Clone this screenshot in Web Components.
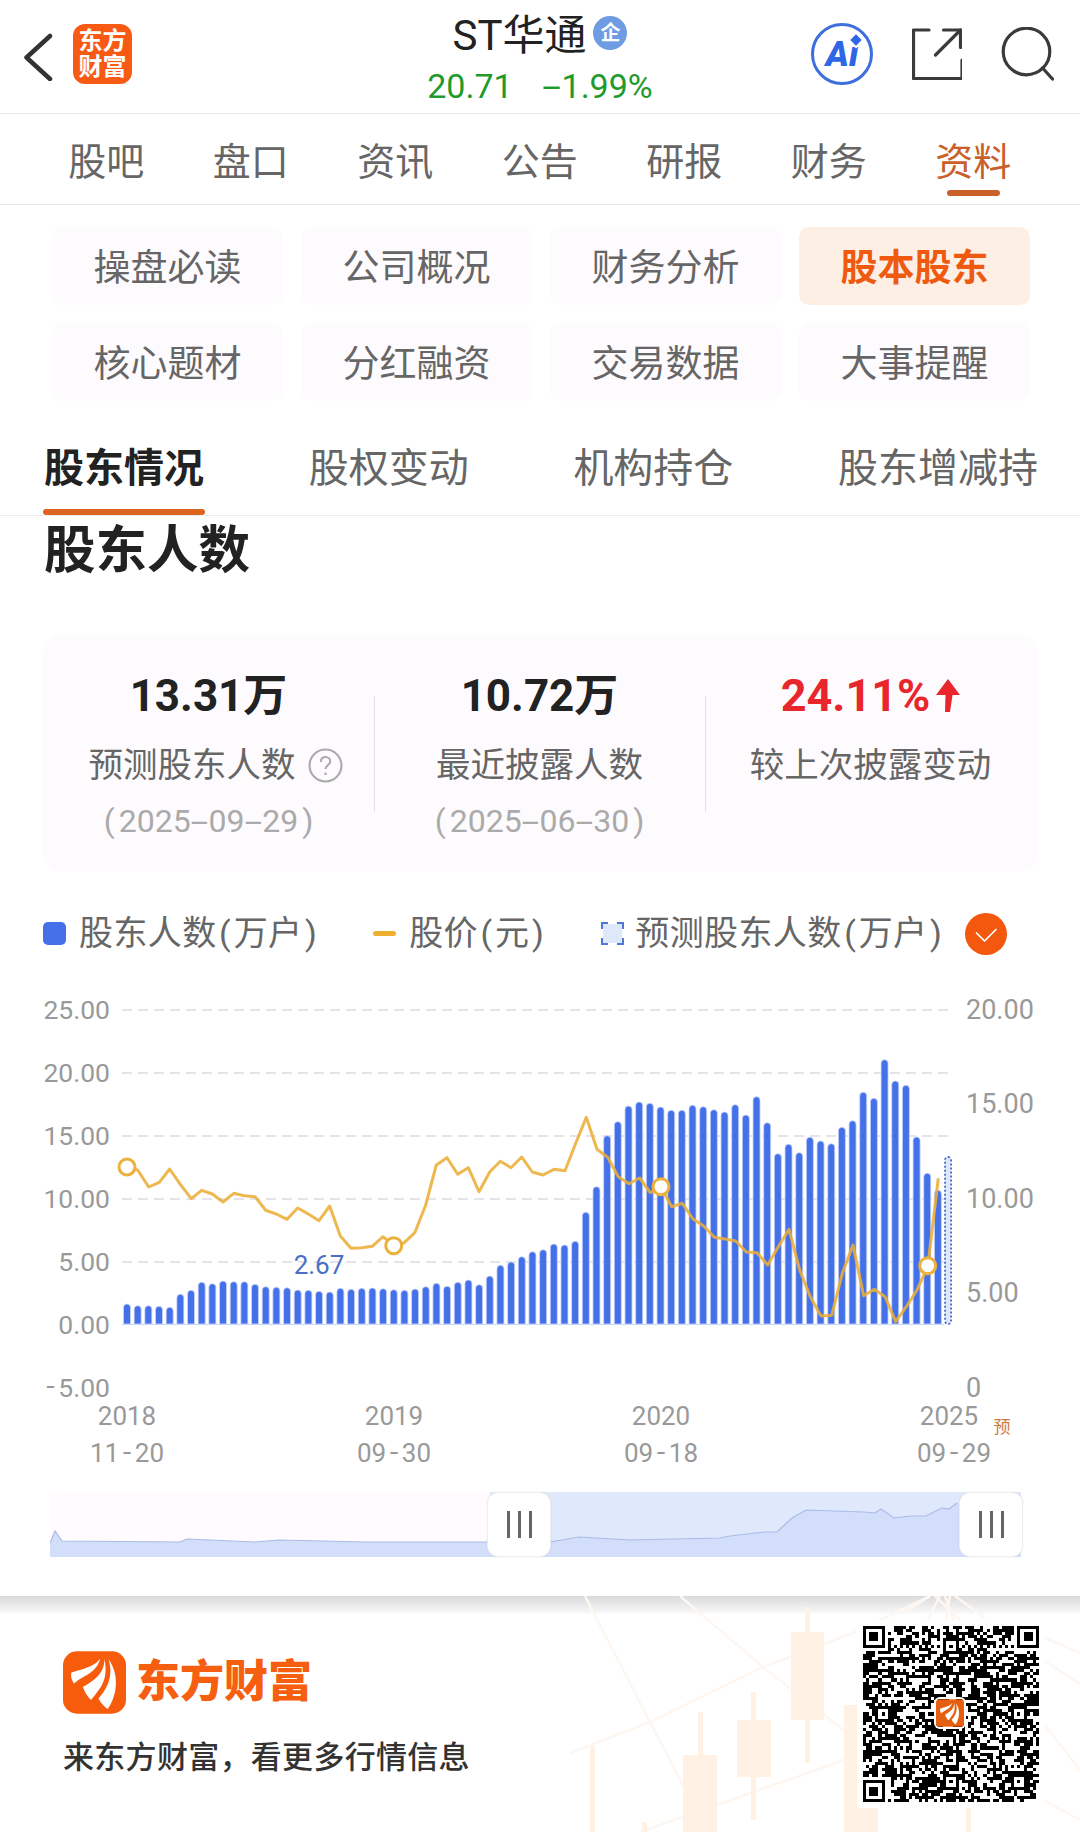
<!DOCTYPE html>
<html lang="zh">
<head>
<meta charset="utf-8">
<title>ST华通 股东人数</title>
<style>
    html, body { margin: 0; padding: 0; background: #fff; }
    body {
        width: 1080px;
        height: 1832px;
        overflow: hidden;
        font-family: Roboto, "Noto Sans CJK SC", sans-serif;
        color: #222;
    }
    /* the reference has wide dashes and roomy brackets */
    .h { display: inline-block; margin: 0 0.14em; transform: scaleX(2); }
    .p { margin: 0 4px; }
</style>
</head>
<body>
<em-header></em-header>
<em-tabs>
    <em-tab>股吧</em-tab><em-tab>盘口</em-tab><em-tab>资讯</em-tab><em-tab>公告</em-tab><em-tab>研报</em-tab><em-tab>财务</em-tab><em-tab active>资料</em-tab>
</em-tabs>
<em-chips>
    <em-chip>操盘必读</em-chip><em-chip>公司概况</em-chip><em-chip>财务分析</em-chip><em-chip active>股本股东</em-chip>
    <em-chip>核心题材</em-chip><em-chip>分红融资</em-chip><em-chip>交易数据</em-chip><em-chip>大事提醒</em-chip>
</em-chips>
<em-subtabs>
    <em-subtab active>股东情况</em-subtab><em-subtab>股权变动</em-subtab><em-subtab>机构持仓</em-subtab><em-subtab>股东增减持</em-subtab>
</em-subtabs>
<em-section heading="股东人数">
    <em-stats>
        <em-stat hint>
            <span slot="value">13.31万</span>
            <span slot="label">预测股东人数</span>
            <svg slot="label" width="35" height="35" viewBox="0 0 34 34" fill="none" stroke="#aaa" stroke-width="2"><circle cx="17" cy="17" r="15.5"/><path d="M12.5 13.5c0-3 2-4.8 4.6-4.8s4.5 1.800 4.500 4.200c0 3.600-4.500 3.700-4.500 7.600"/><circle cx="17" cy="25" r="1.300" fill="#aaa" stroke="none"/></svg>
            <span slot="date"><span class="p">(</span>2025<span class="h">-</span>09<span class="h">-</span>29<span class="p">)</span></span>
        </em-stat>
        <em-stat>
            <span slot="value">10.72万</span>
            <span slot="label">最近披露人数</span>
            <span slot="date"><span class="p">(</span>2025<span class="h">-</span>06<span class="h">-</span>30<span class="p">)</span></span>
        </em-stat>
        <em-stat tone="up">
            <span slot="value">24.11%</span>
            <svg slot="value" width="24" height="34" viewBox="0 0 24 34"><path d="M12 0L24 16H16.500L14 33H9L9.500 16H0Z" fill="#e8262c"/></svg>
            <span slot="label">较上次披露变动</span>
        </em-stat>
    </em-stats>
    <em-legend></em-legend>
    <em-chart></em-chart>
    <em-range></em-range>
</em-section>
<em-promo></em-promo>

<script>
const BLADES = 'M137 40C120 65 85 70 50 82C48 92 50 105 58 115C85 90 125 85 137 40ZM150 40C150 85 120 105 85 125C90 140 98 155 110 165C130 135 165 110 150 40ZM162 42C178 90 160 130 132 160C140 175 150 185 160 192C190 150 195 85 162 42Z';

class EmHeader extends HTMLElement {
    connectedCallback() {
        this.attachShadow({ mode: 'open' });
        this.shadowRoot.innerHTML = `
            <style>
                :host { display: grid; grid-template-columns: 1fr auto 1fr; height: 113px; border-bottom: 1px solid #e6e6e6; }
                .left { display: flex; align-items: center; padding-left: 22px; gap: 19px; }
                .logo {
                    width: 59px; height: 60px; border-radius: 12px; background: #f75a12; color: #fff;
                    display: flex; align-items: center; justify-content: center; text-align: center;
                    font-size: 24px; line-height: 26px; font-weight: 700; margin-top: -6px;
                }
                .title { display: flex; flex-direction: column; align-items: center; }
                .name { display: flex; align-items: center; height: 38px; margin-top: 17px; font-size: 42px; line-height: 38px; color: #222; gap: 7px; }
                .badge {
                    width: 34px; height: 34px; border-radius: 50%; background: #6e9be2; color: #fff;
                    font-size: 20px; line-height: 34px; font-weight: 700; text-align: center; margin-top: -6px;
                }
                .quote { margin-top: 14px; font-size: 34px; line-height: 34px; color: #1f9a2c; display: flex; gap: 30px; }
                .h { display: inline-block; margin: 0 0.14em; transform: scaleX(2); }
                .right { display: flex; justify-content: flex-end; align-items: flex-start; padding: 23px 25px 0 0; gap: 39px; }
                .ai {
                    position: relative; width: 56px; height: 56px; border: 3px solid #3e6fdc; border-radius: 50%;
                    color: #2f66e6; font-size: 35px; font-weight: 900; font-style: italic; line-height: 58px; text-align: center;
                }
                .ai i { position: absolute; right: 10px; top: 10px; width: 8px; height: 8px; background: #2f66e6; transform: rotate(45deg); box-shadow: 0 0 0 2px #fff; }
                svg { display: block; }
            </style>
            <div class="left">
                <svg width="32" height="48" viewBox="0 0 32 48" fill="none" stroke="#333" stroke-width="4.500" stroke-linecap="round" stroke-linejoin="round"><path d="M28 3L4.500 24.500 28 46"/></svg>
                <div class="logo"><span>东方<br>财富</span></div>
            </div>
            <div class="title">
                <div class="name"><span>ST华通</span><span class="badge">企</span></div>
                <div class="quote"><span>20.71</span><span><span class="h">-</span>1.99%</span></div>
            </div>
            <div class="right">
                <div class="ai">Ai<i></i></div>
                <svg width="50" height="56" viewBox="0 0 50 56" fill="none" stroke="#3a3a3a" stroke-width="3.200" stroke-linecap="round" stroke-linejoin="round" style="margin-top:5px"><path d="M17 2H1.500v48.500h48.500V32"/><path d="M23.500 27L48.500 2"/><path d="M31.500 2h17v17.500"/></svg>
                <svg width="54" height="56" viewBox="0 0 54 56" fill="none" stroke="#3a3a3a" stroke-width="3.200" stroke-linecap="round" style="margin-top:4px"><circle cx="25.500" cy="24.500" r="23.300"/><path d="M41.500 41l10 11"/></svg>
            </div>
        `;
    }
}

class EmTabs extends HTMLElement {
    connectedCallback() {
        this.attachShadow({ mode: 'open' });
        this.shadowRoot.innerHTML = `
            <style>
                :host { display: flex; height: 90px; padding: 0 34px; border-bottom: 1px solid #e8e8e8; }
            </style>
            <slot></slot>
        `;
    }
}

class EmTab extends HTMLElement {
    connectedCallback() {
        this.attachShadow({ mode: 'open' });
        this.shadowRoot.innerHTML = `
            <style>
                :host { position: relative; flex: 0 0 144.5px; box-sizing: border-box; padding-bottom: 2px; display: flex; align-items: center; justify-content: center; font-size: 38px; color: #666; }
                :host([active]) { color: #c9602a; }
                :host([active])::after {
                    content: ''; position: absolute; left: 46px; right: 46px; bottom: 8px; height: 6px;
                    border-radius: 3px; background: #c9602a;
                }
            </style>
            <slot></slot>
        `;
    }
}

class EmChips extends HTMLElement {
    connectedCallback() {
        this.attachShadow({ mode: 'open' });
        this.shadowRoot.innerHTML = `
            <style>
                :host { display: grid; grid-template-columns: repeat(4, 231px); gap: 18px; padding: 22px 0 0 52px; }
            </style>
            <slot></slot>
        `;
    }
}

class EmChip extends HTMLElement {
    connectedCallback() {
        this.attachShadow({ mode: 'open' });
        this.shadowRoot.innerHTML = `
            <style>
                :host { display: flex; box-sizing: border-box; height: 78px; padding-bottom: 2px; align-items: center; justify-content: center; border-radius: 10px; background: #fefbfe; font-size: 37px; color: #666; }
                :host([active]) { background: #feefe5; color: #ee5a10; font-weight: 700; }
            </style>
            <slot></slot>
        `;
    }
}

class EmSubtabs extends HTMLElement {
    connectedCallback() {
        this.attachShadow({ mode: 'open' });
        this.shadowRoot.innerHTML = `
            <style>
                :host { display: flex; align-items: flex-end; height: 114px; gap: 104.7px; padding-left: 44px; border-bottom: 1px solid #ececec; white-space: nowrap; overflow: hidden; }
            </style>
            <slot></slot>
        `;
    }
}

class EmSubtab extends HTMLElement {
    connectedCallback() {
        this.attachShadow({ mode: 'open' });
        this.shadowRoot.innerHTML = `
            <style>
                :host { position: relative; display: block; box-sizing: border-box; height: 68px; padding-top: 2px; font-size: 40px; line-height: 40px; color: #666; }
                :host([active]) { color: #222; font-weight: 700; }
                :host([active])::after {
                    content: ''; position: absolute; left: -1px; right: -1px; bottom: 0; height: 6px;
                    border-radius: 3px; background: #dd6420;
                }
            </style>
            <slot></slot>
        `;
    }
}

class EmSection extends HTMLElement {
    connectedCallback() {
        this.attachShadow({ mode: 'open' });
        this.shadowRoot.innerHTML = `
            <style>
                :host { display: block; height: 1080px; }
                h2 { margin: 0; padding: 10px 0 0 44px; height: 110px; box-sizing: border-box; font-size: 51.5px; line-height: 50px; font-weight: 700; color: #222; }
            </style>
            <h2>${this.getAttribute('heading')}</h2>
            <slot></slot>
        `;
    }
}

class EmStats extends HTMLElement {
    connectedCallback() {
        this.attachShadow({ mode: 'open' });
        this.shadowRoot.innerHTML = `
            <style>
                :host { display: grid; grid-template-columns: repeat(3, 331px); box-sizing: border-box; height: 237px; margin: 9px 42px 0 43px; padding-top: 39px; border-radius: 18px; background: #fefbfe; }
            </style>
            <slot></slot>
        `;
    }
}

class EmStat extends HTMLElement {
    connectedCallback() {
        this.attachShadow({ mode: 'open' });
        this.shadowRoot.innerHTML = `
            <style>
                :host { position: relative; display: flex; flex-direction: column; align-items: center; }
                :host(:not(:first-child))::before { content: ''; position: absolute; left: 0; top: 22px; height: 116px; width: 1px; background: #e2e2e4; }
                .value { display: flex; align-items: center; gap: 3px; height: 44px; font-size: 44px; line-height: 44px; font-weight: 700; color: #222; }
                :host([tone="up"]) .value { color: #e8262c; gap: 6px; font-size: 45px; }
                .label { display: flex; align-items: center; gap: 12px; height: 34px; margin-top: 30px; font-size: 34.5px; line-height: 34px; color: #666; }
                :host([hint]) .label { padding-left: 14px; }
                .date { height: 34px; margin-top: 22px; font-size: 32px; line-height: 34px; color: #aaa; }
            </style>
            <div class="value"><slot name="value"></slot></div>
            <div class="label"><slot name="label"></slot></div>
            <div class="date"><slot name="date"></slot></div>
        `;
    }
}

class EmLegend extends HTMLElement {
    connectedCallback() {
        this.attachShadow({ mode: 'open' });
        const unit = s => `<b>(</b>${s}<b>)</b>`;
        this.shadowRoot.innerHTML = `
            <style>
                :host { display: flex; align-items: center; height: 41px; margin: 41px 0 0 43px; font-size: 34px; letter-spacing: 0.4px; line-height: 43px; color: #666; white-space: nowrap; }
                .item { display: flex; align-items: center; gap: 13px; }
                .price { margin-left: 53.5px; }
                .predict { margin-left: 54.5px; gap: 11px; }
                b { font-weight: 400; margin: 0 2.5px; }
                .sq { width: 23px; height: 23px; border-radius: 5px; background: #4470ea; }
                .dash { width: 23px; height: 5px; border-radius: 3px; background: #eeb02f; }
                .check { margin-left: 20px; }
                svg { display: block; }
            </style>
            <div class="item"><span class="sq"></span><span>股东人数${unit('万户')}</span></div>
            <div class="item price"><span class="dash"></span><span>股价${unit('元')}</span></div>
            <div class="item predict">
                <svg width="23" height="23" viewBox="0 0 23 23"><rect x="2" y="2" width="19" height="19" fill="#dfe7fb"/><path d="M1 7V1h6M16 1h6v6M22 16v6h-6M7 22H1v-6" fill="none" stroke="#4d79d8" stroke-width="2"/></svg>
                <span>预测股东人数${unit('万户')}</span>
            </div>
            <svg class="check" width="42" height="42" viewBox="0 0 42 42"><circle cx="21" cy="21" r="21" fill="#f4580f"/><path d="M11.500 20l8 8L31 16.500" fill="none" stroke="#fff" stroke-width="1.700" stroke-linecap="round" stroke-linejoin="round"/></svg>
        `;
    }
}

// tops of the bars and points of the price line, read off the reference
const BAR_TOPS = [1304,1305.7,1305.7,1306.3,1307.3,1294.3,1290.3,1282.3,1283.7,1281,1281.7,1281.7,1284.3,1286.7,1287.3,1287.7,1290,1290.3,1291.3,1292,1288.3,1289.3,1288.3,1288,1288.7,1289.7,1290.3,1289,1286.7,1283.3,1286.3,1282.3,1280,1284.7,1276,1265.3,1262,1256.7,1251.7,1249.7,1244,1245,1241.3,1212.3,1186.7,1135.7,1121.7,1106,1102,1103.3,1107,1110.3,1110.3,1105.3,1106.7,1109.7,1112,1104.7,1115,1096.7,1122.7,1153.7,1144.3,1152.7,1137.3,1141,1143.7,1127.3,1120.7,1092.3,1098.3,1059.7,1081,1085.3,1137,1173.3,1190.3];
const PREDICT_TOP = 1157;
const PRICE = [[127,1167.7],[137.7,1170],[148.7,1187],[159.3,1182.3],[169.7,1169],[180.3,1184.3],[191.3,1198.7],[201.7,1190.3],[212.3,1194],[223,1202],[233.7,1193.3],[244.3,1195.7],[255,1196.7],[265.7,1210.3],[276.3,1214],[287,1219.3],[297.7,1208],[308.3,1214],[319,1220.7],[329.7,1206],[340.3,1236],[351,1248.3],[361.7,1247.7],[372.3,1246.3],[383,1236.7],[393.7,1245.7],[404.3,1242.7],[415,1232.3],[425.7,1205],[436.3,1165],[447,1157.7],[457.7,1174.3],[468.3,1167.7],[479,1191.7],[489.7,1172],[500.3,1161.3],[511,1167.7],[521.700,1157],[532.3,1172],[543,1175],[554,1169.3],[565,1170.7],[575.7,1143.3],[586.3,1117.3],[597,1149.3],[607.7,1157.3],[618.3,1176.7],[629,1183.7],[639.7,1178],[650.3,1192.7],[661,1186.7],[671.7,1206.7],[682.3,1203.3],[693,1219],[703.7,1226],[714.3,1237.3],[725,1239],[735.7,1241],[746.3,1252],[757,1252.7],[767.7,1265],[778.3,1246.7],[789,1229.3],[799.7,1270],[810.3,1296.7],[821,1316],[831.7,1315.3],[842.3,1273.3],[853,1245],[863.700,1295.7],[874.3,1289.3],[885,1296.7],[895.7,1321.7],[906.3,1306.7],[917,1290],[927.7,1266.7],[938.3,1178.3]];

class EmChart extends HTMLElement {
    connectedCallback() {
        this.attachShadow({ mode: 'open' });
        const base = 1324;
        let bars = '';
        BAR_TOPS.forEach((top, i) => {
            const x = 123.500 + i * 10.67;
            bars += `<path d="M${x} ${base}V${top + 3.500}a3.500 3.500 0 0 1 7 0V${base}Z"/>`;
        });
        const px = 123.500 + 77 * 10.67;
        const dash = s => s.replace('-', '<tspan class="h">-</tspan>');
        const gridYs = [1010, 1073, 1136, 1199, 1262];
        const leftAxis = [['25.00', 1009], ['20.00', 1072], ['15.00', 1135], ['10.00', 1198], ['5.00', 1261], ['0.00', 1324], ['-5.00', 1387]];
        const rightAxis = [['20.00', 1010], ['15.00', 1104], ['10.00', 1199], ['5.00', 1293], ['0', 1388]];
        const xAxis = [['2018', '11-20', 127, 127], ['2019', '09-30', 394, 394], ['2020', '09-18', 661, 661], ['2025', '09-29', 949, 954]];
        const line = PRICE.map(p => p.join(',')).join(' ');
        const dots = [[127, 1167], [393.7, 1245.7], [661, 1186.7], [927.7, 1265.700]];
        this.shadowRoot.innerHTML = `
            <style>
                :host { display: block; height: 490px; margin-top: 36px; }
                svg { display: block; }
                text { font-size: 26px; fill: #999; dominant-baseline: central; }
                .right text { font-size: 27px; }
                .h { font-family: "Liberation Mono", monospace; }
            </style>
            <svg width="1080" height="490" viewBox="0 990 1080 490">
                <g stroke="#e4e4ea" stroke-width="2" stroke-dasharray="10 6">
                    ${gridYs.map(y => `<line x1="122" x2="952" y1="${y}" y2="${y}"/>`).join('')}
                </g>
                <g text-anchor="end">${leftAxis.map(a => `<text x="110" y="${a[1]}" style="font-size:26.500px">${dash(a[0])}</text>`).join('')}</g>
                <g class="right">${rightAxis.map(a => `<text x="966" y="${a[1]}">${a[0]}</text>`).join('')}</g>
                <g fill="#4470ea" stroke="#c9d6f8" stroke-width="0.800">${bars}</g>
                <line x1="122" x2="944" y1="1324.500" y2="1324.500" stroke="#c9d6f8" stroke-width="1"/>
                <rect x="${px}" y="${PREDICT_TOP}" width="6" height="${base - PREDICT_TOP}" rx="3" fill="#dfe7fb" stroke="#3f6bd0" stroke-width="1.800" stroke-dasharray="2 2"/>
                <polyline points="${line}" fill="none" stroke="#ecae38" stroke-opacity="0.880" stroke-width="3" stroke-linejoin="round"/>
                ${dots.map(d => `<circle cx="${d[0]}" cy="${d[1]}" r="8" fill="#fff" stroke="#ecb03c" stroke-width="3"/>`).join('')}
                <text x="319" y="1265" text-anchor="middle" style="fill:#4a6fc8">2.67</text>
                <g text-anchor="middle">
                    ${xAxis.map(a => `<text x="${a[2]}" y="1416">${a[0]}</text><text x="${a[3]}" y="1453">${dash(a[1])}</text>`).join('')}
                </g>
                <text x="1002" y="1427" text-anchor="middle" style="font-size:17px;fill:#cb7a3c">预</text>
            </svg>
        `;
    }
}

class EmRange extends HTMLElement {
    connectedCallback() {
        this.attachShadow({ mode: 'open' });
        // area outline, in reference x / y
        const pts = [[50,1543],[55,1531],[62,1541],[180,1542],[187,1539],[255,1542],[279,1540],[365,1542],[550,1542],[579,1537],[630,1540],[720,1538],[730,1536],[764,1532],[777,1532],[792,1518],[806,1510],[864,1512],[875,1513],[881,1509],[894,1518],[902,1517],[912,1516],[926,1516],[942,1508],[949,1509],[957,1503]];
        const line = pts.map(p => p.join(',')).join(' ');
        this.shadowRoot.innerHTML = `
            <style>
                :host { position: relative; display: block; width: 973px; height: 65px; margin: 12px 0 0 50px; }
                svg { display: block; }
                .handle {
                    position: absolute; top: 0; width: 64px; height: 65px; box-sizing: border-box; border: 1px solid #eee;
                    border-radius: 11px; background: #fff; display: flex; align-items: center; justify-content: center; gap: 8px;
                    box-shadow: 0 0 2px rgba(0, 0, 0, 0.08);
                }
                .handle i { width: 3px; height: 27px; background: #666; }
            </style>
            <svg width="973" height="65" viewBox="50 1492 973 65">
                <rect x="50" y="1492" width="440" height="65" fill="#fffbfe"/>
                <rect x="490" y="1492" width="531" height="65" fill="#e0e8fc"/>
                <polygon points="50,1557 ${line} 1021,1503 1021,1557" fill="#d3dffa"/>
                <polyline points="${line}" fill="none" stroke="#a9bbe6" stroke-width="1.200"/>
            </svg>
            <div class="handle" style="left:437px"><i></i><i></i><i></i></div>
            <div class="handle" style="left:909px"><i></i><i></i><i></i></div>
        `;
    }
}

class EmQr extends HTMLElement {
    connectedCallback() {
        this.attachShadow({ mode: 'open' });
        const n = 57;
        const cells = [];
        for (let y = 0; y < n; y++) cells.push(new Array(n).fill(-1));
        const finder = (ox, oy) => {
            for (let y = -1; y <= 7; y++) for (let x = -1; x <= 7; x++) {
                if (ox + x < 0 || oy + y < 0 || ox + x >= n || oy + y >= n) continue;
                const ring = x >= 0 && x <= 6 && y >= 0 && y <= 6 && (x === 0 || x === 6 || y === 0 || y === 6);
                const core = x >= 2 && x <= 4 && y >= 2 && y <= 4;
                cells[oy + y][ox + x] = ring || core ? 1 : 0;
            }
        };
        finder(0, 0); finder(n - 7, 0); finder(0, n - 7);
        for (let i = 8; i < n - 8; i++) { cells[6][i] = (i + 1) % 2; cells[i][6] = (i + 1) % 2; }
        [6, 28, 50].forEach(cy => [6, 28, 50].forEach(cx => {
            if ((cx === 6 && cy === 6) || (cx === 50 && cy === 6) || (cx === 6 && cy === 50) || (cx === 28 && cy === 28)) return;
            for (let y = -2; y <= 2; y++) for (let x = -2; x <= 2; x++) {
                cells[cy + y][cx + x] = Math.max(Math.abs(x), Math.abs(y)) === 1 ? 0 : 1;
            }
        }));
        let seed = 20250929;
        const rnd = () => { seed = (seed * 1664525 + 1013904223) >>> 0; return (seed >>> 16) / 65536; };
        let d = '';
        for (let y = 0; y < n; y++) {
            for (let x = 0; x < n; x++) {
                let on = cells[y][x];
                if (on === -1) {
                    // runs of modules rather than pure noise, as a real code looks
                    const left = x > 0 ? cells[y][x - 1] : 0;
                    on = rnd() < (left === 1 ? 0.62 : 0.46) ? 1 : 0;
                    cells[y][x] = on;
                }
                if (on) d += `M${x} ${y}h1v1h-1z`;
            }
        }
        this.shadowRoot.innerHTML = `
            <style>
                :host { position: relative; display: block; width: 176px; height: 176px; padding: 6px; background: #fff; }
                svg { display: block; }
                .mark { position: absolute; left: 79px; top: 79px; width: 28px; height: 28px; border-radius: 4px; box-shadow: 0 0 0 2px #fff; }
            </style>
            <svg width="176" height="176" viewBox="0 0 57 57" shape-rendering="crispEdges"><path d="${d}" fill="#000"/></svg>
            <svg class="mark" viewBox="20 15 200 195"><rect x="20" y="15" width="200" height="195" fill="#e65f10"/><path d="${BLADES}" fill="#fff"/></svg>
        `;
    }
}

class EmPromo extends HTMLElement {
    connectedCallback() {
        this.attachShadow({ mode: 'open' });
        this.shadowRoot.innerHTML = `
            <style>
                :host {
                    position: relative; display: flex; justify-content: space-between; box-sizing: border-box;
                    height: 236px; padding: 55px 35px 0 63px; overflow: hidden;
                    background: linear-gradient(#dadada, #f8f8f8 17px, #fff 18px);
                }
                .decor { position: absolute; left: 0; top: 0; }
                .copy, em-qr { position: relative; }
                .brand { display: flex; align-items: center; gap: 10px; color: #f65e10; font-size: 44px; line-height: 63px; font-weight: 900; }
                .brand svg { display: block; }
                .tag { margin-top: 26px; font-size: 31px; letter-spacing: 0.3px; line-height: 36px; font-weight: 500; color: #333; }
                em-qr { margin-top: -31px; }
            </style>
            <svg class="decor" width="1080" height="236" viewBox="0 1596 1080 236">
                <g fill="none" stroke="#fef7f1" stroke-width="2.500">
                    <path d="M680 1596L763 1667 850 1735 880 1755"/>
                    <path d="M585 1596L650 1722 707 1832"/>
                    <path d="M570 1753L650 1722 763 1667 853 1633 930 1596"/>
                    <path d="M640 1832L836 1763 900 1730"/>
                    <path d="M935 1596L960 1620M945 1596L955 1625M940 1596L925 1625M950 1596L945 1625M955 1596L985 1618M930 1596L905 1612"/>
                    <path d="M1043 1637L1080 1653M1043 1660L1080 1684M1043 1723L1080 1770M1043 1800L1080 1820"/>
                </g>
                <g fill="#fff2e5">
                    <rect x="683" y="1755" width="34" height="77"/><rect x="698" y="1712" width="5" height="43"/>
                    <rect x="737" y="1720" width="34" height="57"/><rect x="751" y="1692" width="5" height="128"/>
                    <rect x="791" y="1632" width="33" height="88"/><rect x="805" y="1607" width="5" height="156"/>
                    <rect x="844" y="1705" width="34" height="127"/>
                    <rect x="590" y="1746" width="5" height="86"/><rect x="642" y="1822" width="5" height="10"/>
                    <rect x="966" y="1805" width="5" height="27"/>
                </g>
            </svg>
            <div class="copy">
                <div class="brand">
                    <svg width="63" height="63" viewBox="25 18 190 188"><rect x="25" y="18" width="190" height="188" rx="42" fill="#f75c0d"/><path d="${BLADES}" fill="#fff"/></svg>
                    <span>东方财富</span>
                </div>
                <div class="tag">来东方财富，看更多行情信息</div>
            </div>
            <em-qr></em-qr>
        `;
    }
}

customElements.define('em-header', EmHeader);
customElements.define('em-tabs', EmTabs);
customElements.define('em-tab', EmTab);
customElements.define('em-chips', EmChips);
customElements.define('em-chip', EmChip);
customElements.define('em-subtabs', EmSubtabs);
customElements.define('em-subtab', EmSubtab);
customElements.define('em-section', EmSection);
customElements.define('em-stats', EmStats);
customElements.define('em-stat', EmStat);
customElements.define('em-legend', EmLegend);
customElements.define('em-chart', EmChart);
customElements.define('em-range', EmRange);
customElements.define('em-qr', EmQr);
customElements.define('em-promo', EmPromo);
</script>
</body>
</html>
